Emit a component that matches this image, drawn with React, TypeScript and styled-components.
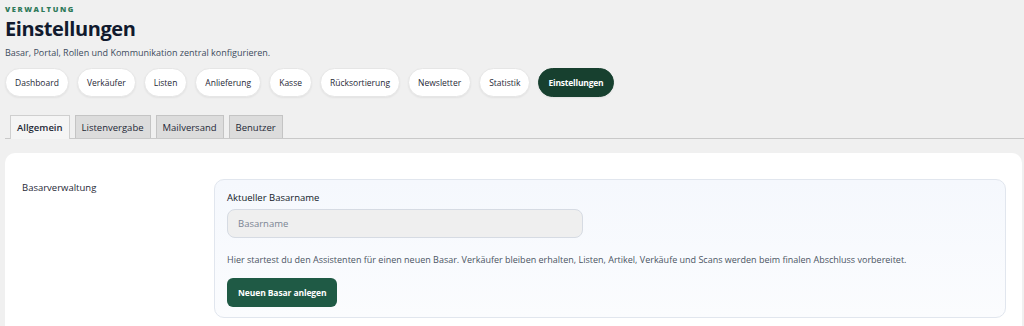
import styled, { createGlobalStyle } from "styled-components";

const GlobalStyle = createGlobalStyle`
    html, body {
        margin: 0;
        padding: 0;
        background: #f0f0f0;
        font-family: "Open Sans", "Noto Sans", sans-serif;
        color: #1f2937;
    }
`;

const Page = styled.div`
    padding: 5px 0 0 5px;
    display: flex;
    flex-direction: column;
`;

const Eyebrow = styled.div`
    font-size: 7.5px;
    font-weight: 800;
    letter-spacing: 1.6px;
    color: #2f7a5a;
    line-height: 9px;
`;

const Title = styled.h1`
    margin: 1px 0 0 0;
    font-size: 20px;
    font-weight: 700;
    color: #111a2e;
    line-height: 28px;
    letter-spacing: -0.4px;
`;

const Subtitle = styled.p`
    margin: 3px 0 0 0;
    font-size: 9px;
    color: #3d4b5c;
    line-height: 13px;
`;

const NavRow = styled.nav`
    display: flex;
    gap: 8px;
    margin-top: 9px;
`;

const NavPill = styled.button<{ active?: boolean }>`
    height: 29px;
    padding: 0 9px;
    border-radius: 15px;
    border: 1px solid ${p => (p.active ? "#17402f" : "#e6e6e6")};
    background: ${p => (p.active ? "#17402f" : "#ffffff")};
    color: ${p => (p.active ? "#ffffff" : "#1f2937")};
    font-family: inherit;
    font-size: 8.5px;
    font-weight: ${p => (p.active ? 700 : 400)};
    letter-spacing: ${p => (p.active ? "-0.2px" : "0")};
    box-shadow: 0 1px 2px rgba(0, 0, 0, 0.06);
    cursor: pointer;
`;

const TabStrip = styled.div`
    display: flex;
    gap: 5px;
    margin-top: 18px;
    padding-left: 5px;
    border-bottom: 1px solid #c9c9c9;
`;

const Tab = styled.div<{ active?: boolean }>`
    height: 22px;
    padding: 0 6px;
    display: flex;
    align-items: center;
    font-size: 9.5px;
    color: #1f2937;
    font-weight: ${p => (p.active ? 600 : 400)};
    background: ${p => (p.active ? "#f5f5f5" : "#dcdcdc")};
    border: 1px solid ${p => (p.active ? "#cfcfcf" : "#c4c4c4")};
    border-bottom: none;
    margin-bottom: ${p => (p.active ? "-1px" : "0")};
    padding-bottom: ${p => (p.active ? "1px" : "0")};
`;

const Card = styled.section`
    margin-top: 14px;
    margin-right: 2px;
    background: #ffffff;
    border-radius: 10px;
    padding: 26px 16px 20px 17px;
    display: grid;
    grid-template-columns: 192px 1fr;
`;

const SectionLabel = styled.div`
    font-size: 9.5px;
    color: #1f2937;
    padding-top: 2px;
`;

const Panel = styled.div`
    background: linear-gradient(180deg, #f5f8fd 0%, #fbfcfe 100%);
    border: 1px solid #e1e6ee;
    border-radius: 10px;
    padding: 11px 12px 10px 12px;
    display: flex;
    flex-direction: column;
    align-items: flex-start;
`;

const FieldLabel = styled.label`
    font-size: 9.5px;
    font-weight: 500;
    color: #111827;
    line-height: 13px;
`;

const TextInput = styled.input`
    margin-top: 5px;
    width: 356px;
    height: 29px;
    box-sizing: border-box;
    padding: 0 10px;
    border: 1px solid #d6dbe3;
    border-radius: 8px;
    background: #efefef;
    font-family: inherit;
    font-size: 9.5px;
    color: #1f2937;
    &::placeholder {
        color: #7b8593;
    }
`;

const Hint = styled.p`
    margin: 15px 0 0 0;
    font-size: 9px;
    color: #4b5563;
    line-height: 13px;
`;

const PrimaryButton = styled.button`
    margin-top: 12px;
    height: 29px;
    padding: 0 11px;
    border: none;
    border-radius: 6px;
    background: #1f5a45;
    color: #ffffff;
    font-family: inherit;
    font-size: 8.5px;
    font-weight: 700;
    letter-spacing: -0.1px;
    cursor: pointer;
`;

const navItems = [
    "Dashboard",
    "Verkäufer",
    "Listen",
    "Anlieferung",
    "Kasse",
    "Rücksortierung",
    "Newsletter",
    "Statistik",
    "Einstellungen",
];

const tabs = ["Allgemein", "Listenvergabe", "Mailversand", "Benutzer"];

const App = () => {
    return (
        <>
            <GlobalStyle />
            <Page>
                <Eyebrow>VERWALTUNG</Eyebrow>
                <Title>Einstellungen</Title>
                <Subtitle>Basar, Portal, Rollen und Kommunikation zentral konfigurieren.</Subtitle>
                <NavRow>
                    {navItems.map(item => (
                        <NavPill key={item} active={item === "Einstellungen"}>
                            {item}
                        </NavPill>
                    ))}
                </NavRow>
                <TabStrip>
                    {tabs.map(tab => (
                        <Tab key={tab} active={tab === "Allgemein"}>
                            {tab}
                        </Tab>
                    ))}
                </TabStrip>
                <Card>
                    <SectionLabel>Basarverwaltung</SectionLabel>
                    <Panel>
                        <FieldLabel>Aktueller Basarname</FieldLabel>
                        <TextInput placeholder="Basarname" />
                        <Hint>
                            Hier startest du den Assistenten für einen neuen Basar. Verkäufer bleiben erhalten,
                            Listen, Artikel, Verkäufe und Scans werden beim finalen Abschluss vorbereitet.
                        </Hint>
                        <PrimaryButton>Neuen Basar anlegen</PrimaryButton>
                    </Panel>
                </Card>
            </Page>
        </>
    );
};

export default App;
